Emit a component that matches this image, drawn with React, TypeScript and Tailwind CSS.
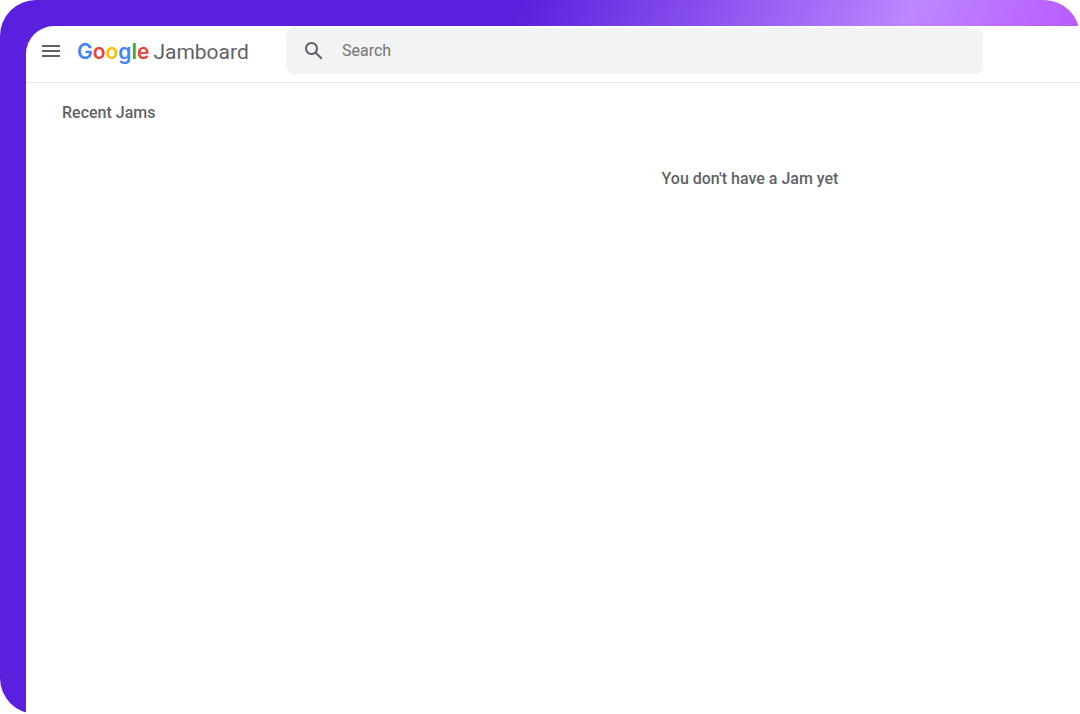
import type { ReactNode } from "react";

const logoLetters = [
    { char: "G", color: "text-[#4285f4]" },
    { char: "o", color: "text-[#ea4335]" },
    { char: "o", color: "text-[#fbbc04]" },
    { char: "g", color: "text-[#4285f4]" },
    { char: "l", color: "text-[#34a853]" },
    { char: "e", color: "text-[#ea4335]" },
];

function Icon({ children }: { children: ReactNode }) {
    return (
        <svg viewBox="0 0 24 24" className="size-6 fill-[#5f6368]" aria-hidden="true">
            {children}
        </svg>
    );
}

function Logo() {
    return (
        <a href="#" className="flex items-baseline gap-1 pt-[2px] text-[21px] leading-8 text-[#5f6368]">
            <span className="font-[Inter] font-semibold">
                {logoLetters.map((letter, index) => (
                    <span key={index} className={letter.color}>{letter.char}</span>
                ))}
            </span>
            <span className="font-[Roboto]">Jamboard</span>
        </a>
    );
}

function Header() {
    return (
        <header className="flex h-[57px] border-b border-[#e3e4e6] pl-[13px] pr-[97px]">
            <div className="flex w-[247px] shrink-0 items-center gap-[14px] pb-[6px]">
                <button type="button" aria-label="Main menu">
                    <Icon>
                        <path d="M3 18h18v-2H3v2zm0-5h18v-2H3v2zm0-7v2h18V6H3z" />
                    </Icon>
                </button>
                <Logo />
            </div>
            <form role="search" className="mt-[2px] flex h-[46px] flex-1 items-center gap-4 rounded-lg bg-[#f1f3f4] px-4">
                <Icon>
                    <path d="M20.49 19l-5.73-5.73C15.53 12.2 16 10.91 16 9.5 16 5.91 13.09 3 9.5 3S3 5.91 3 9.5 5.91 16 9.5 16c1.41 0 2.7-.47 3.77-1.24L19 20.49 20.49 19zM5 9.5C5 7.01 7.01 5 9.5 5S14 7.01 14 9.5 11.99 14 9.5 14 5 11.99 5 9.5z" />
                </Icon>
                <input
                    type="text"
                    placeholder="Search"
                    aria-label="Search"
                    className="min-w-0 flex-1 bg-transparent text-base text-[#5f6368] outline-none placeholder:text-[#757575]"
                />
            </form>
        </header>
    );
}

export default function App() {
    return (
        <div className="bg-white font-[Roboto,sans-serif]">
            <div className="flex min-h-screen flex-col rounded-[36px] bg-[linear-gradient(115deg,#5b1fde_37%,#bc87ff_65%,#ba50ff_80%)] pl-[26px] pt-[26px]">
                <div className="flex flex-1 flex-col rounded-tl-[28px] bg-white">
                    <Header />
                    <main className="text-base font-medium text-[#5f6368]">
                        <h1 className="px-9 pt-[18px]">Recent Jams</h1>
                        <p className="pl-[394px] pt-[42px] text-center">You don't have a Jam yet</p>
                    </main>
                </div>
            </div>
        </div>
    );
}
